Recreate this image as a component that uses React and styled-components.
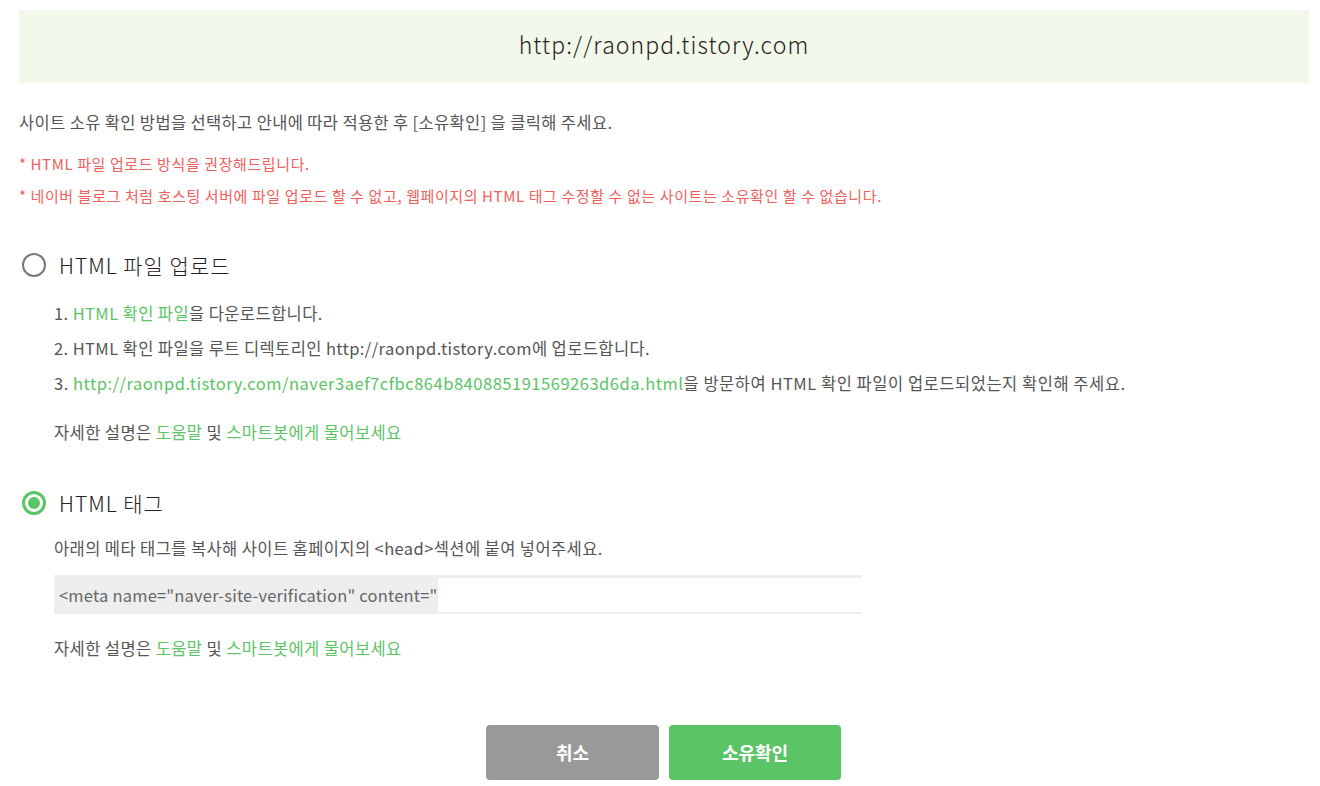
import React from "react";
import styled, { createGlobalStyle } from "styled-components";

const Global = createGlobalStyle`
  html, body { margin: 0; padding: 0; background: #fff; }
  body { font-family: "Noto Sans CJK KR", "Noto Sans", sans-serif; color: #555; }
  * { box-sizing: border-box; }
`;

const Page = styled.div`
  padding: 10px 11px 0 19px;
  display: flex;
  flex-direction: column;
`;

const UrlBar = styled.div`
  height: 73px;
  background: #f2f8ea;
  display: flex;
  align-items: center;
  justify-content: center;
  padding-bottom: 5px;
  font-size: 23px;
  font-weight: 300;
  color: #222;
  letter-spacing: 1.1px;
`;

const Intro = styled.p`
  margin: 28px 0 0;
  font-size: 16.5px;
  line-height: 22px;
  color: #555;
  letter-spacing: 0.35px;
`;

const Notice = styled.p`
  margin: ${(p) => p.$top}px 0 0;
  font-size: 15px;
  line-height: 20px;
  color: #f0605c;
  letter-spacing: 0.6px;
`;

const Section = styled.section`
  margin-top: ${(p) => p.$top}px;
  display: flex;
  flex-direction: column;
`;

const RadioRow = styled.label`
  display: flex;
  align-items: center;
  gap: 13px;
  padding-left: 3px;
  font-size: 21px;
  font-weight: 300;
  color: #222;
  line-height: 28px;
  letter-spacing: 1px;
`;

const Radio = styled.span`
  width: 24px;
  height: 24px;
  flex: none;
  border-radius: 50%;
  border: ${(p) => (p.$checked ? "3px solid #5bc466" : "2.5px solid #777")};
  display: flex;
  align-items: center;
  justify-content: center;
  &::after {
    content: "";
    display: ${(p) => (p.$checked ? "block" : "none")};
    width: 12px;
    height: 12px;
    border-radius: 50%;
    background: #5bc466;
  }
`;

const Body = styled.div`
  padding-left: 35px;
  display: flex;
  flex-direction: column;
`;

const Line = styled.p`
  margin: ${(p) => p.$top || 0}px 0 0;
  font-size: 16.5px;
  line-height: 35px;
  color: #555;
  letter-spacing: ${(p) => p.$ls ?? 0.4}px;
  white-space: nowrap;
`;

const Green = styled.span`
  color: #5bc466;
`;

const MetaBox = styled.div`
  margin-top: 9px;
  width: 808px;
  height: 39px;
  background: #eee;
  display: flex;
  align-items: stretch;
  padding: 3px 0 2px 0;
`;

const MetaText = styled.span`
  display: flex;
  align-items: center;
  padding-left: 5px;
  font-size: 16.5px;
  color: #666;
  letter-spacing: 0.2px;
  white-space: nowrap;
`;

const MetaInput = styled.input`
  flex: 1;
  min-width: 0;
  border: none;
  background: #fff;
  outline: none;
  margin: 0;
  padding: 0;
`;

const Buttons = styled.div`
  margin-top: 59px;
  display: flex;
  justify-content: center;
  gap: 10px;
  padding-right: 1px;
`;

const Button = styled.button`
  width: ${(p) => p.$w}px;
  height: 55px;
  border: none;
  border-radius: 4px;
  background: ${(p) => p.$bg};
  color: #fff;
  font-family: "Noto Sans CJK KR", sans-serif;
  font-size: 18px;
  font-weight: 700;
  letter-spacing: 0;
  padding-bottom: 2px;
`;

export default function App() {
  return (
    <>
      <Global />
      <Page>
        <UrlBar>http://raonpd.tistory.com</UrlBar>
        <Intro>사이트 소유 확인 방법을 선택하고 안내에 따라 적용한 후 [소유확인] 을 클릭해 주세요.</Intro>
        <Notice $top={21}>* HTML 파일 업로드 방식을 권장해드립니다.</Notice>
        <Notice $top={12}>
          * 네이버 블로그 처럼 호스팅 서버에 파일 업로드 할 수 없고, 웹페이지의 HTML 태그 수정할 수 없는 사이트는 소유확인 할 수 없습니다.
        </Notice>

        <Section $top={45}>
          <RadioRow>
            <Radio />
            HTML 파일 업로드
          </RadioRow>
          <Body>
            <Line $top={17}>
              1. <Green>HTML 확인 파일</Green>을 다운로드합니다.
            </Line>
            <Line>2. HTML 확인 파일을 루트 디렉토리인 http://raonpd.tistory.com에 업로드합니다.</Line>
            <Line $ls={0.52}>
              3. <Green>http://raonpd.tistory.com/naver3aef7cfbc864b840885191569263d6da.html</Green>을 방문하여 HTML 확인 파일이 업로드되었는지 확인해 주세요.
            </Line>
            <Line $top={14}>
              자세한 설명은 <Green>도움말</Green> 및 <Green>스마트봇에게 물어보세요</Green>
            </Line>
          </Body>
        </Section>

        <Section $top={39}>
          <RadioRow>
            <Radio $checked />
            HTML 태그
          </RadioRow>
          <Body>
            <Line $top={14}>아래의 메타 태그를 복사해 사이트 홈페이지의 &lt;head&gt;섹션에 붙여 넣어주세요.</Line>
            <MetaBox>
              <MetaText>&lt;meta name="naver-site-verification" content="</MetaText>
              <MetaInput readOnly />
            </MetaBox>
            <Line $top={17}>
              자세한 설명은 <Green>도움말</Green> 및 <Green>스마트봇에게 물어보세요</Green>
            </Line>
          </Body>
        </Section>

        <Buttons>
          <Button $w={173} $bg="#999">취소</Button>
          <Button $w={172} $bg="#5bc466">소유확인</Button>
        </Buttons>
      </Page>
    </>
  );
}
